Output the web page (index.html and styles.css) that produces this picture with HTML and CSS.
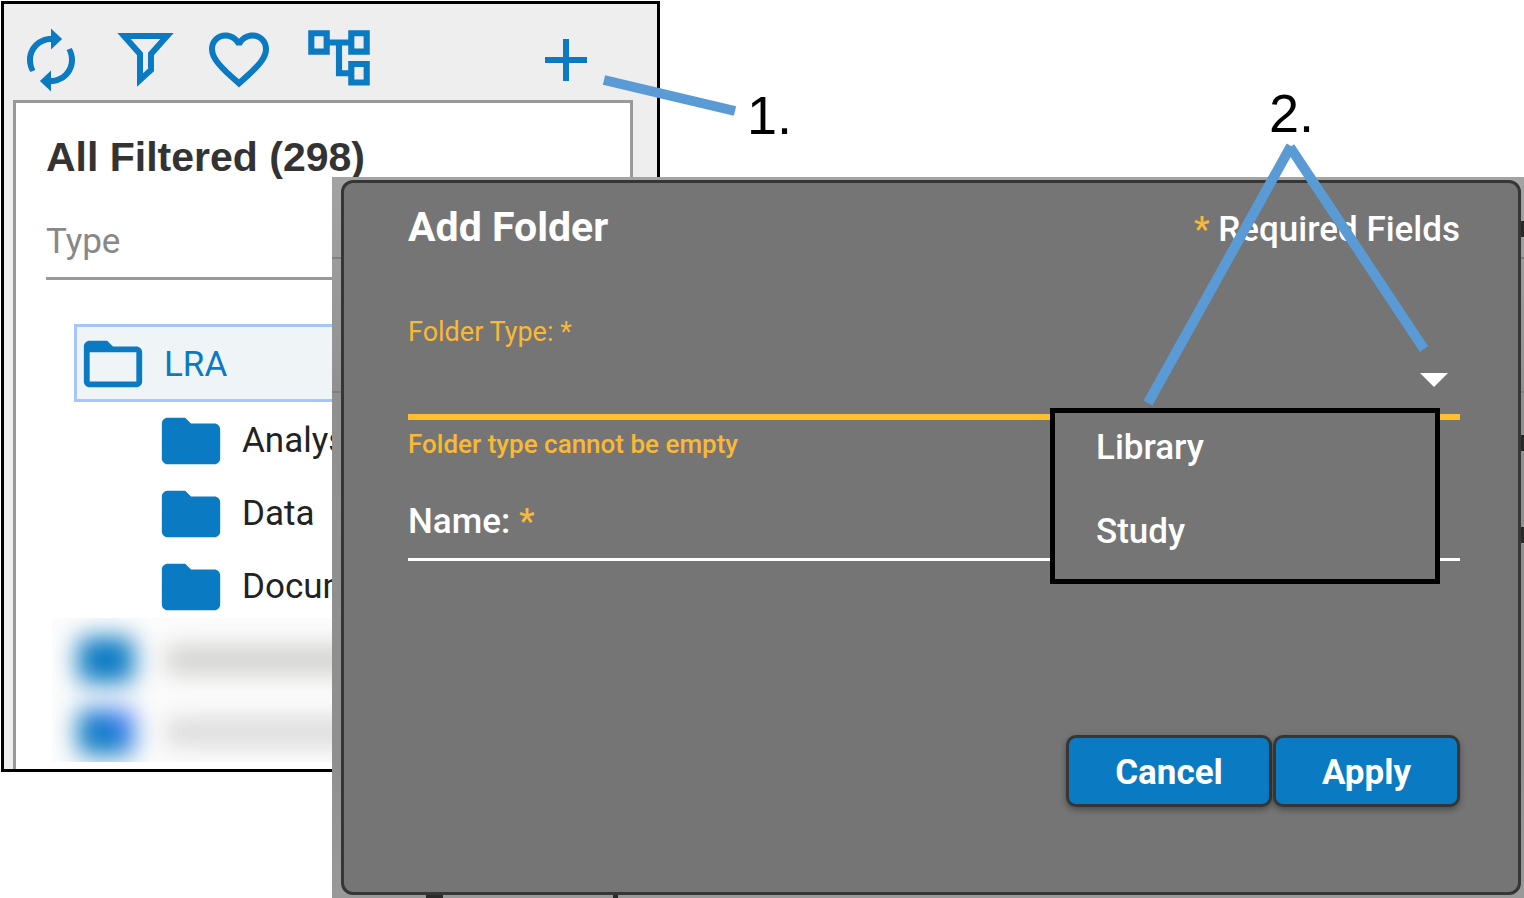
FILE: index.html
```html
<!DOCTYPE html>
<html lang="en">
<head>
<meta charset="utf-8">
<title>Add Folder</title>
<link rel="stylesheet" href="styles.css">
</head>
<body>
<svg class="defs" aria-hidden="true">
  <symbol id="folder" viewBox="0 0 24 24"><path d="M10 4H4c-1.1 0-1.99.9-1.99 2L2 18c0 1.1.9 2 2 2h16c1.1 0 2-.9 2-2V8c0-1.1-.9-2-2-2h-8l-2-2z"/></symbol>
</svg>
<main class="guide">
  <section class="browser" aria-label="Folders">
    <div class="toolbar">
      <button class="tool" type="button" aria-label="Refresh"><svg class="tool-icon" viewBox="0 0 24 24"><path d="M12 6v2.5l3.7-3.5-3.7-3.5v2.5c-4.42 0-8 3.58-8 8 0 1.4.4 2.9 1.1 4l1.7-.7c-.5-.9-.8-2.1-.8-3.3 0-3.31 2.69-6 6-6zm6.9 2l-1.7.7c.5.9.8 2.1.8 3.3 0 3.31-2.69 6-6 6v-2.500l-3.7 3.5 3.7 3.500v-2.500c4.42 0 8-3.58 8-8 0-1.4-.4-2.9-1.1-4z"/></svg></button>
      <button class="tool" type="button" aria-label="Filter"><svg class="tool-icon" viewBox="0 0 72 72"><path class="funnel" d="M15 12H58L42 30V46L31 56V30Z"/></svg></button>
      <button class="tool" type="button" aria-label="Favorites"><svg class="tool-icon" viewBox="0 0.2 24 24"><path d="M16.5 3c-1.74 0-3.41.81-4.5 2.09C10.91 3.81 9.24 3 7.5 3 4.42 3 2 5.42 2 8.5c0 3.78 3.4 6.86 8.55 11.54L12 21.35l1.45-1.32C18.6 15.36 22 12.28 22 8.5 22 5.42 19.58 3 16.5 3zm-4.4 15.55l-.1.1-.1-.1C7.14 14.24 4 11.39 4 8.5 4 6.5 5.5 5 7.5 5c1.54 0 3.04.99 3.57 2.36h1.87C13.46 5.99 14.96 5 16.5 5c2 0 3.5 1.5 3.5 3.5 0 2.89-3.14 5.74-7.9 10.05z"/></svg></button>
      <button class="tool tool-tree" type="button" aria-label="Tree view"><svg class="tool-icon" viewBox="0.3 1 23.4 23.4"><path d="M22 11V3h-7v3H9V3H2v8h7V8h2v10h4v3h7v-8h-7v3h-2V8h2v3h7zM7 9H4V5h3v4zm10 6h3v4h-3v-4zm0-10h3v4h-3V5z"/></svg></button>
      <button class="tool tool-add" type="button" aria-label="Add"><svg class="tool-icon" viewBox="0 0 24 24"><path d="M19 13h-6v6h-2v-6H5v-2h6V5h2v6h6v2z"/></svg></button>
    </div>
    <div class="list">
      <h1 class="list-title">All Filtered (298)</h1>
      <input class="list-search" type="text" placeholder="Type" aria-label="Type">
      <ul class="tree">
        <li class="row row-selected"><svg class="folder" viewBox="0 0 24 24"><path d="M20 6h-8l-2-2H4c-1.1 0-1.99.9-1.99 2L2 18c0 1.1.9 2 2 2h16c1.1 0 2-.9 2-2V8c0-1.1-.9-2-2-2zm0 12H4V8h16v10z"/></svg><span>LRA</span></li>
        <li class="row row-child"><svg class="folder"><use href="#folder"/></svg><span>Analysis</span></li>
        <li class="row row-child"><svg class="folder"><use href="#folder"/></svg><span>Data</span></li>
        <li class="row row-child"><svg class="folder"><use href="#folder"/></svg><span>Documents</span></li>
      </ul>
      <div class="redacted" aria-hidden="true">
        <div class="smudge"><i class="smudge-icon"></i><i class="smudge-text"></i></div>
        <div class="smudge"><i class="smudge-icon smudge-alt"></i><i class="smudge-text smudge-light"></i></div>
      </div>
    </div>
  </section>

  <div class="backdrop">
    <i class="edge edge-a"></i><i class="edge edge-b"></i>
    <i class="speck speck-a"></i><i class="speck speck-b"></i><i class="speck speck-c"></i>
    <i class="speck speck-d"></i><i class="speck speck-e"></i>
    <form class="dialog" aria-labelledby="dialog-title">
      <header class="dialog-head">
        <h2 class="dialog-title" id="dialog-title">Add Folder</h2>
        <p class="required"><span class="star">*</span> Required Fields</p>
      </header>
      <div class="type-field">
        <label class="type-label" for="folder-type">Folder Type: *</label>
        <div class="select-wrap">
          <select class="type-select" id="folder-type"><option value=""></option><option>Library</option><option>Study</option></select>
          <svg class="caret" viewBox="0 0 28 14"><path d="M0 0H28L14 14Z"/></svg>
          <ul class="menu">
            <li><button class="menu-item" type="button">Library</button></li>
            <li><button class="menu-item" type="button">Study</button></li>
          </ul>
        </div>
        <p class="error">Folder type cannot be empty</p>
      </div>
      <div class="name-field">
        <label class="name-label" for="folder-name">Name: <span class="star">*</span></label>
        <input class="name-input" id="folder-name" type="text">
      </div>
      <footer class="actions">
        <button class="action" type="button">Cancel</button>
        <button class="action action-apply" type="button">Apply</button>
      </footer>
    </form>
  </div>

  <svg class="pointer pointer-one" viewBox="0 0 140 48"><path d="M4 10L135 41"/></svg>
  <p class="step step-one">1.</p>
  <svg class="pointer pointer-two" viewBox="0 0 290 266"><path d="M151 4L8 261M150 5L284 207"/></svg>
  <p class="step step-two">2.</p>
</main>
</body>
</html>
```
FILE: styles.css
```css
* { box-sizing: border-box; }
body { margin: 0; background: #fff; font-family: Roboto, "Liberation Sans", sans-serif; }
h1, h2, p, ul { margin: 0; padding: 0; }
ul { list-style: none; }
button, input, select { font: inherit; color: inherit; border: 0; padding: 0; background: none; }
.defs { display: none; }

.guide { position: relative; min-height: 100vh; padding: 1px; overflow: hidden; }

/* Folder browser */
.browser { width: 659px; border: 3px solid #000; background: #eee; }
.toolbar { display: flex; gap: 22px; padding: 20px 55px 4px 11px; }
.tool { width: 72px; height: 72px; flex: none; }
.tool-tree { margin-left: 6px; }
.tool-add { margin-left: auto; }
.tool-icon { display: block; width: 72px; height: 72px; fill: #0a7ac2; }
.funnel { fill: none; stroke: #0a7ac2; stroke-width: 6; }
.list { margin: 0 24px 0 9px; padding: 30px 0 7px 30px; border: 3px solid #999; border-bottom: 0; background: #fff; overflow: hidden; }
.list-title { font: bold 41px/48px "Liberation Sans", Arial, sans-serif; color: #333; }
.list-search { display: block; width: 100%; height: 75px; margin-top: 24px; border-bottom: 3px solid #999; font-size: 35px; color: #333; }
.list-search::placeholder { color: #888; opacity: 1; }
.tree { margin: 44px 0 0 28px; font-size: 35px; color: #222; }
.row { display: flex; align-items: center; gap: 16px; height: 73px; white-space: nowrap; }
.row-selected { height: 78px; margin-bottom: 2px; padding: 2px 0 0 1px; border: 3px solid #a4c6fb; background: #eff4f7; color: #0a7ac2; }
.row-child { padding-left: 82px; }
.folder { width: 70px; height: 70px; flex: none; fill: #0a7ac2; }
.redacted { height: 144px; margin: -5px 0 0 6px; padding: 6px 0 0 26px; background: #fcfcfc; overflow: hidden; }
.smudge { display: flex; align-items: center; gap: 32px; height: 72px; filter: blur(12px); }
.smudge-icon { width: 56px; height: 46px; border-radius: 8px; background: #0a7ac2; }
.smudge-alt { background: linear-gradient(45deg, #0a7ac2 45%, #3f7cf5 75%); }
.smudge-text { flex: 1; height: 28px; background: #d0d0ce; }
.smudge-light { background: #dadada; }

/* Dialog over the dimmed page */
.backdrop { position: absolute; top: 177px; right: 0; bottom: 0; left: 332px; display: flex; padding: 3px 3px 3px 9px; background: linear-gradient(#a3a3a3, #909090 30%, #8f8f8f 80%, #999); }
.edge { position: absolute; left: 0; width: 100%; height: 2px; background: #808080; }
.edge-a { top: 80px; }
.edge-b { top: 214px; }
.speck { position: absolute; right: 0; width: 3px; height: 16px; background: #2a2a2a; }
.speck-a { top: 44px; }
.speck-b { top: 258px; }
.speck-c { top: 350px; }
.speck-d { right: auto; bottom: 0; left: 94px; width: 17px; height: 3px; }
.speck-e { right: auto; bottom: 0; left: 281px; width: 5px; height: 3px; }
.dialog { position: relative; display: flex; flex: 1; flex-direction: column; padding: 20px 58px 85px 64px; border: 3px solid #363636; border-radius: 12px; background: #757575; color: #fff; }
.dialog-head { display: flex; justify-content: space-between; align-items: baseline; }
.dialog-title { font-size: 41px; font-weight: 700; line-height: 48px; }
.required { font-size: 35px; font-weight: 500; line-height: 48px; }
.star { color: #f9b934; }
.type-field { margin-top: 60px; color: #f9b934; font-size: 27px; line-height: 36px; }
.type-label { display: block; }
.select-wrap { position: relative; }
.type-select { display: block; width: 100%; height: 70px; appearance: none; border-bottom: 6px solid #ffc02b; border-radius: 0; color: #fff; }
.caret { position: absolute; top: 23px; right: 12px; width: 28px; height: 14px; fill: #fff; pointer-events: none; }
.error { margin-top: 6px; font-size: 26px; font-weight: 500; }
.menu { position: absolute; top: 58px; right: 20px; z-index: 1; width: 390px; height: 176px; border: 5px solid #000; background: #757575; color: #fff; font-size: 35px; font-weight: 500; }
.menu-item { width: 100%; height: 84px; padding: 0 0 14px 41px; text-align: left; }
.name-field { display: flex; align-items: center; gap: 12px; margin-top: 36px; padding-bottom: 12px; border-bottom: 3px solid #fff; font-size: 35px; font-weight: 500; line-height: 48px; }
.name-input { flex: 1; min-width: 0; height: 48px; }
.actions { display: flex; justify-content: flex-end; gap: 1px; margin-top: auto; }
.action { width: 206px; height: 72px; padding-top: 2px; border: 3px solid #363636; border-radius: 10px; background: #0a7ac2; font-size: 35px; font-weight: 700; box-shadow: 0 3px 6px rgba(0, 0, 0, .35); }
.action-apply { width: 187px; }

/* Numbered callouts */
.pointer { position: absolute; fill: none; stroke: #5b9bd5; stroke-width: 10; }
.pointer-one { top: 70px; left: 600px; width: 140px; height: 48px; }
.pointer-two { top: 142px; right: 94px; width: 290px; height: 266px; }
.step { position: absolute; font: 54px/60px "Liberation Sans", Arial, sans-serif; color: #000; }
.step-one { top: 85px; left: 747px; }
.step-two { top: 83px; right: 210px; }
```
